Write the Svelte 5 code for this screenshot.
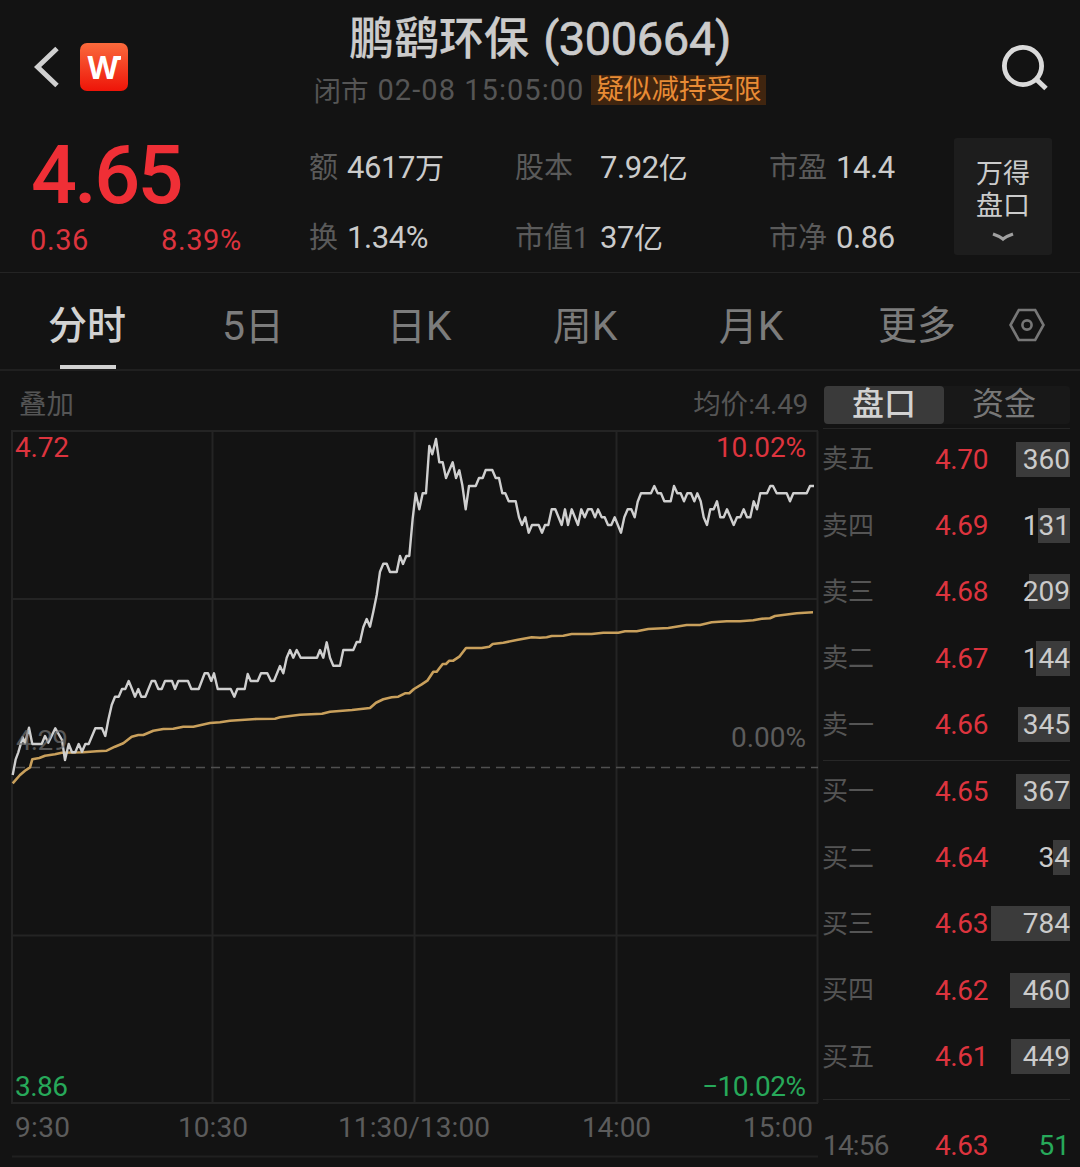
<script>
  const stats = [
    [['额', '4617', '万'], ['股本', '7.92', '亿'], ['市盈', '14.4', '']],
    [['换', '1.34%', ''], ['市值1', '37', '亿'], ['市净', '0.86', '']]
  ];
  const tabs = [['', '分时'], ['5', '日'], ['', '日', 'K'], ['', '周', 'K'], ['', '月', 'K'], ['', '更多']];
  const asks = [
    { name: '卖五', price: '4.70', qty: 360, bar: 54 },
    { name: '卖四', price: '4.69', qty: 131, bar: 32 },
    { name: '卖三', price: '4.68', qty: 209, bar: 41 },
    { name: '卖二', price: '4.67', qty: 144, bar: 34 },
    { name: '卖一', price: '4.66', qty: 345, bar: 52 }
  ];
  const bids = [
    { name: '买一', price: '4.65', qty: 367, bar: 54 },
    { name: '买二', price: '4.64', qty: 34, bar: 17 },
    { name: '买三', price: '4.63', qty: 784, bar: 79 },
    { name: '买四', price: '4.62', qty: 460, bar: 60 },
    { name: '买五', price: '4.61', qty: 449, bar: 59 }
  ];

  // Line samples in thirds of a pixel, relative to each segment's origin.
  const place = (ox, oy, s) =>
    s.trim().split(/\s+/).map((p) => {
      const [x, y] = p.split(',').map(Number);
      return `${(ox + x / 3).toFixed(1)},${(oy + y / 3).toFixed(1)}`;
    }).join(' ');

  const priceLine = [
    place(0, 600, '38,525 47,478 55,457 68,412 75,430 87,383 97,432 125,432 135,408 145,428 166,385 186,420 195,480 206,432 216,457 226,457 236,432 246,455 256,432 266,432 286,385 306,385 316,408 325,360 335,315 345,290 356,290 366,267 376,267 386,243 396,267 405,290 415,267 424,290 436,290 455,243 465,243 475,267 485,267 495,243 516,243 525,267 535,243 564,243 574,267 596,267 614,220 624,220 634,243 642,220 653,267 692,267 703,290 712,267 734,267 743,222 752,243 773,243 783,220 802,220 813,243'),
    place(270, 430, '12,752 30,708 40,730 50,683 60,660 70,683 80,660 92,683 141,683 150,660 160,683 170,637 180,683 190,707 210,707 220,660 250,660 260,636 270,636 280,592 290,567 300,590 310,545 320,495 330,425 340,401 350,401 360,426 380,426 390,378 399,402 409,378 418,378 428,265 437,190 448,238 458,190 468,190 478,48 487,73 498,27 508,97 518,97 528,144 548,97 558,144 568,121 577,165 587,238 597,168 617,168 627,144 638,144 647,120 667,120 677,144 687,144 697,190 706,190 716,214 737,214 747,262 756,285 766,262 776,308 786,285 806,285 816,308'),
    place(540, 430, '15,285 25,285 35,238 46,238 65,285 75,238 84,285 95,238 114,285 124,238 134,262 144,238 155,238 165,262 174,238 185,262 194,262 204,285 214,285 224,262 243,308 253,262 263,238 274,238 284,262 293,215 303,190 333,190 343,168 353,190 363,190 373,214 392,214 402,168 412,190 422,190 432,214 442,190 453,190 463,214 472,190 482,214 491,262 501,285 511,238 521,238 531,214 541,262 551,262 561,238 581,285 591,262 601,262 611,238 621,262 631,262 641,214 651,238 661,190 681,190 691,168 699,168 710,190 740,190 750,214 760,190 800,190 810,168 822,168')
  ].join(' ');

  const averageLine = [
    place(0, 600, '38,550 60,525 75,512 90,502 97,478 118,474 135,467 165,463 185,458 250,457 290,454 320,452 345,440 370,430 395,410 415,405 430,405 460,392 490,387 520,386 550,380 580,380 630,369 660,367 690,362 770,357 825,356 840,352 900,344 966,341 990,335 1056,330 1110,324'),
    place(270, 430, '318,818 340,808 365,802 385,800 405,790 418,790 432,777 455,763 472,752 490,725 500,725 518,702 528,702 538,692 550,692 568,680 588,654 635,654 658,650 668,642 700,638 740,630 785,622'),
    place(540, 430, '0,623 20,622 35,618 70,617 95,612 155,612 190,608 235,608 255,604 290,604 325,597 385,594 440,585 480,585 515,577 560,574 600,574 640,571 665,566 690,565 705,558 770,550 819,547')
  ].join(' ');
</script>

{#snippet row(r)}
  <div class="row">
    <span class="name">{r.name}</span>
    <span class="price">{r.price}</span>
    <span class="qty"><i class="bar" style="width:{r.bar}px"></i><em>{r.qty}</em></span>
  </div>
{/snippet}

<main>
  <header>
    <div class="left">
      <svg class="back" width="26" height="44" viewBox="0 0 26 44"><path d="M23 3.5 3.6 22 23 40.5" /></svg>
      <span class="logo">W</span>
    </div>
    <div class="title">
      <h1>鹏鹞环保<span>(300664)</span></h1>
      <p><span class="state">闭市</span><span class="time">02-08 15:05:00</span><mark>疑似减持受限</mark></p>
    </div>
    <svg class="search" width="50" height="50" viewBox="0 0 50 50">
      <circle cx="22" cy="22" r="18.6" /><path d="M35 35 45 44.5" />
    </svg>
  </header>

  <section class="quote">
    <div class="last">
      <strong>4.65</strong>
      <div class="change"><span>0.36</span><span>8.39%</span></div>
    </div>
    <div class="stats">
      {#each stats as line}
        {#each line as [label, num, unit]}
          <div class="stat"><span class="label">{label}</span><span class="num">{num}</span><span class="unit">{unit}</span></div>
        {/each}
      {/each}
    </div>
    <div class="depth">
      <span>万得</span><span>盘口</span>
      <svg width="24" height="10" viewBox="0 0 24 10"><path d="M2 2Q8 4 12 7Q16 4 22 2" /></svg>
    </div>
  </section>

  <nav>
    {#each tabs as [pre, cjk, post], i}
      <div class="tab" class:active={i === 0}><span>{#if pre}<b>{pre}</b>{/if}{cjk}{#if post}<b>{post}</b>{/if}</span></div>
    {/each}
    <svg class="gear" width="38" height="36" viewBox="0 0 38 36">
      <path d="M10.8 3H27.2L35.5 18 27.2 33H10.8L2.5 18Z" /><circle cx="19" cy="18" r="4.6" />
    </svg>
  </nav>

  <div class="body">
    <section class="chart">
      <div class="legend"><span>叠加</span><span>均价<b>:4.49</b></span></div>
      <svg class="plot" width="820" height="737" viewBox="0 430 820 737">
        <g class="grid">
          <path d="M11 431H818M12 599H818M12 935.5H818M12 1103H818M12 431V1104M212.5 431V1103M414.5 431V1103M616.5 431V1103M817.5 431V1103" />
          <path d="M12 1156.5H818" />
        </g>
        <path class="zero" d="M16 767.5H818" />
        <polyline class="avg" points={averageLine} />
        <polyline class="px" points={priceLine} />
        <g class="labels">
          <text x="15" y="457" class="up" textLength="54">4.72</text>
          <text x="716" y="457" class="up" textLength="90">10.02%</text>
          <text x="16" y="750" class="mid" textLength="52">4.29</text>
          <text x="731" y="747" class="dim" textLength="75">0.00%</text>
          <text x="15" y="1096" class="down" textLength="53">3.86</text>
          <text x="702" y="1096" class="down" textLength="104">−10.02%</text>
          <text x="15" y="1137" class="dim" textLength="55">9:30</text>
          <text x="178" y="1137" class="dim" textLength="70">10:30</text>
          <text x="338" y="1137" class="dim" textLength="152">11:30/13:00</text>
          <text x="582" y="1137" class="dim" textLength="69">14:00</text>
          <text x="743" y="1137" class="dim" textLength="70">15:00</text>
        </g>
      </svg>
    </section>

    <aside>
      <div class="switch"><span class="on">盘口</span><span>资金</span></div>
      <div class="book asks">{#each asks as r}{@render row(r)}{/each}</div>
      <div class="book bids">{#each bids as r}{@render row(r)}{/each}</div>
      <div class="row tick">
        <span class="clock">14:56</span><span class="price">4.63</span><span class="qty green"><em>51</em></span>
      </div>
    </aside>
  </div>
</main>

<style>
  :global(body) { margin: 0; background: #131313; }
  main {
    width: 1080px; height: 1167px; overflow: hidden; background: #131313; color: #cbcbcb;
    font-family: Roboto, "Noto Sans CJK SC", sans-serif; box-sizing: border-box;
  }
  svg { display: block; fill: none; }
  h1, p { margin: 0; font-weight: 400; }
  b, em, i { font-weight: inherit; font-style: normal; }

  header { display: grid; grid-template-columns: 1fr auto 1fr; height: 122px; }
  .left { display: flex; align-items: center; gap: 19px; padding: 12px 0 0 35px; height: 110px; }
  .back { margin-left: -1px; margin-right: 1px; }
  .back path { stroke: #d0d0d0; stroke-width: 5; }
  .logo {
    position: relative; width: 46px; height: 48px; padding-right: 2px; border-radius: 7px;
    background: linear-gradient(#fa6a3c, #ee1408); color: #fff;
    font: 700 32px/47px "Open Sans", sans-serif; text-align: center;
  }
  .logo::after { content: ""; position: absolute; left: 34px; top: 13px; width: 7px; height: 4px; background: #fff; border-radius: 3px 0 1px 0; }
  .title { display: flex; flex-direction: column; align-items: center; padding-top: 8px; }
  h1 { height: 60px; line-height: 61px; font-size: 45px; font-weight: 500; white-space: nowrap; -webkit-text-stroke: 0.2px #cbcbcb; }
  h1 span { font-size: 47px; font-weight: 400; letter-spacing: -0.4px; margin-left: 14px; -webkit-text-stroke: 0.7px #cbcbcb; }
  p { display: flex; align-items: center; height: 44px; font-size: 27.5px; color: #555; white-space: nowrap; }
  .state { margin-top: -3px; }
  .time { margin-left: 9px; font-size: 29px; letter-spacing: 1.05px; }
  mark { margin-left: 7px; width: 175px; height: 30px; line-height: 29px; background: #40250f; color: #e88b35; font-size: 27.5px; text-align: center; }
  .search { justify-self: end; margin: 44px 29px 0 0; }
  .search circle { stroke: #dadada; stroke-width: 4.8; }
  .search path { stroke: #dadada; stroke-width: 5; }

  .quote { display: flex; height: 150px; border-bottom: 1px solid #242424; }
  .last { width: 309px; color: #ef2f36; }
  strong { display: block; height: 100px; line-height: 107px; padding-left: 31px; font-size: 81px; font-weight: 500; letter-spacing: -2.7px; }
  .change { display: flex; padding-left: 30px; height: 36px; line-height: 36px; font-size: 29px; letter-spacing: 0.6px; }
  .change span:first-child { width: 131px; }
  .change span { color: #dd343e; }
  .stats { display: grid; grid-template-columns: 206px 254px 185px; grid-template-rows: 70px 70px; padding-top: 10px; height: 140px; }
  .stat { display: flex; align-items: center; white-space: nowrap; }
  .label { color: #5a5a5a; font-size: 29px; margin: -4px 9px 0 0; }
  .stat:nth-child(3n + 2) .label { width: 76px; }
  .num { font-size: 31px; letter-spacing: -0.4px; }
  .unit { font-size: 29px; margin-top: -2px; }
  .depth {
    display: flex; flex-direction: column; align-items: center; width: 98px; height: 97px; margin-top: 16px; padding-top: 20px;
    background: #1d1d1d; border-radius: 3px; font-size: 27px; line-height: 32px;
  }
  .depth svg { margin: 10px 0 0 0; }
  .depth path { stroke: #a0a0a0; stroke-width: 3.4; }

  nav { display: flex; align-items: center; height: 96px; padding-left: 4px; border-bottom: 2px solid #202020; }
  .tab { position: relative; width: 166px; height: 96px; line-height: 107px; text-align: center; font-size: 39px; color: #7c7c7c; }
  .tab b { font-size: 41px; }
  .active { color: #d2d2d2; font-weight: 500; }
  .active::after { content: ""; position: absolute; left: 56px; bottom: 0; width: 56px; height: 4px; background: #d2d2d2; }
  .gear { margin: 7px 0 0 8px; }
  .gear path, .gear circle { stroke: #777; stroke-width: 2.6; }

  .body { display: flex; }
  .chart { width: 820px; }
  .legend { display: flex; justify-content: space-between; height: 59px; line-height: 68px; padding: 0 12px 0 19px; font-size: 27.5px; color: #555; }
  .legend b { font-size: 28px; letter-spacing: -0.3px; }
  .grid path { stroke: #242424; stroke-width: 2; }
  .grid path:last-child { stroke: #202020; }
  .zero { stroke: #505050; stroke-width: 1.6; stroke-dasharray: 9 6; }
  .px { stroke: #cfcfcf; stroke-width: 2.4; stroke-linejoin: round; }
  .avg { stroke: #c9a05c; stroke-width: 2.6; stroke-linejoin: round; }
  .labels { font-size: 28px; }
  .up { fill: #dd343e; }
  .down { fill: #27a95a; }
  .dim { fill: #5c5c5c; }
  .mid { fill: #777; fill-opacity: 0.7; }

  aside { width: 260px; }
  .switch { display: flex; width: 246px; height: 38px; margin: 15px 0 0 4px; background: #181818; border-radius: 4px; }
  .switch span { width: 120px; line-height: 37px; text-align: center; font-size: 32px; color: #777; }
  .switch .on { background: #3a3a3a; color: #d2d2d2; font-weight: 500; border-radius: 4px; }
  .book { width: 247px; margin-left: 3px; border-bottom: 1px solid #272727; }
  .asks { border-top: 1px solid #252525; margin-top: 4px; height: 331px; }
  .bids { height: 341px; }
  .row { display: grid; grid-template-columns: 112px 66px 1fr; align-items: center; height: 66.35px; }
  .asks .row:first-child, .bids .row:first-child { margin-top: -3px; }
  .name { font-size: 26px; color: #555; margin: -5px 0 0 -1px; }
  .price { font-size: 28px; color: #dd343e; letter-spacing: -0.4px; }
  .qty { position: relative; height: 35px; line-height: 35px; font-size: 28px; text-align: right; }
  .bar { position: absolute; right: 0; top: 0; height: 35px; background: #3b3b3b; }
  em { position: relative; }
  .tick { width: 247px; margin-left: 3px; height: 91px; }
  .clock { color: #5c5c5c; font-size: 28px; letter-spacing: -0.8px; }
  .green { color: #27a95a; }
</style>
